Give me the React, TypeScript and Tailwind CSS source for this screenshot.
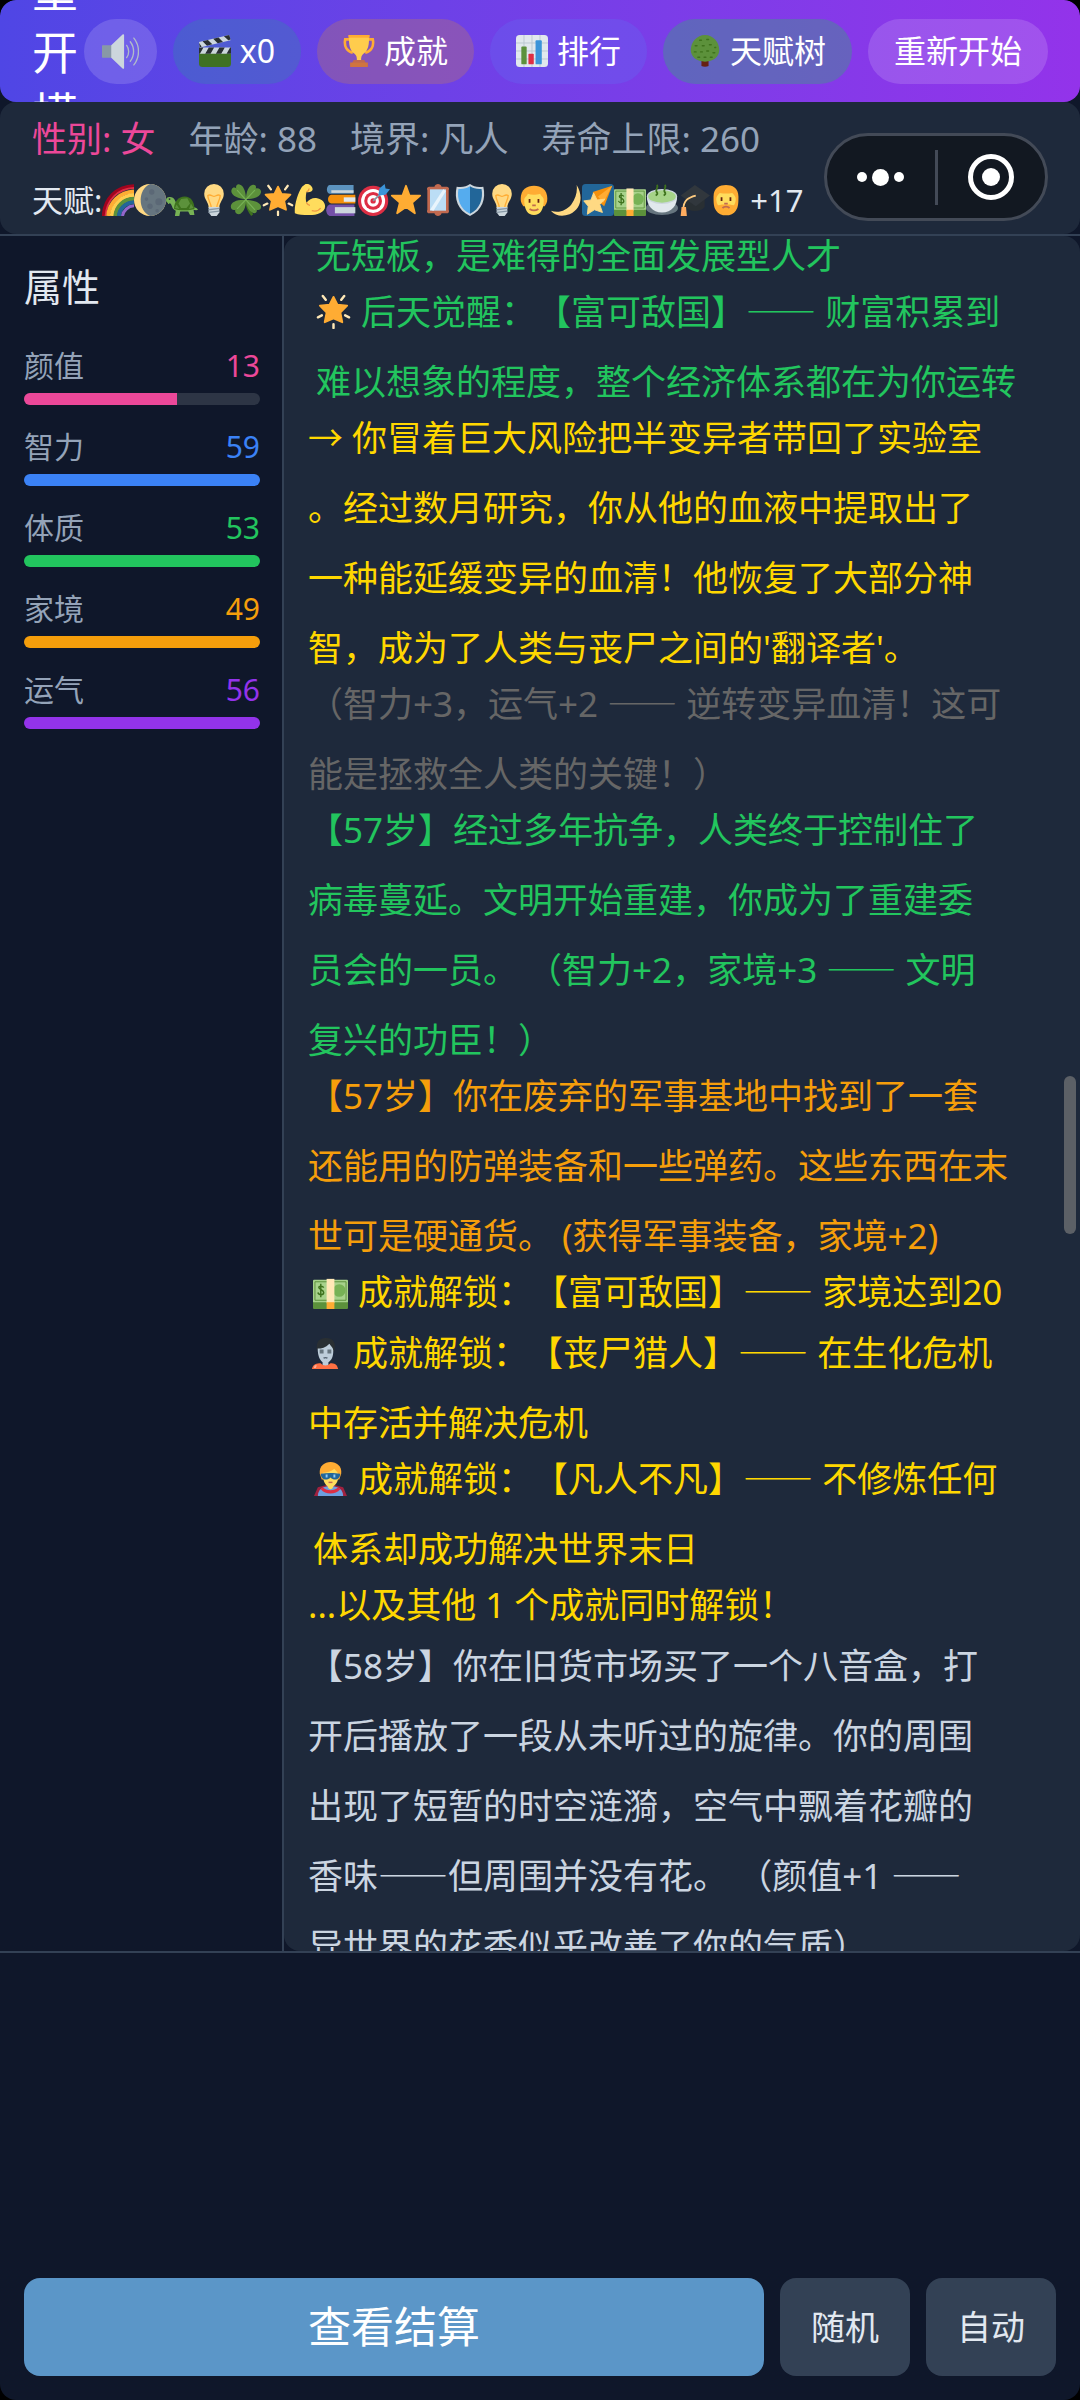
import type { ReactNode } from "react";
import clsx from "clsx";

// 所有表情图标都画在 36x36 的画布上
const GLYPHS: Record<string, ReactNode> = {
  speaker: (
    <>
      <path fill="#8899a6" d="M1 12c-1 0-1 .5-1 1v10c0 .6 0 1 1 1h9V12z" />
      <path fill="#ccd6dd" d="M20 1.500c.6-.6 1.500-.5 1.500.5v32c0 1-.9 1-1.500.5L9 24V12z" />
      <g fill="none" stroke="#b0bcc8" strokeLinecap="round" strokeWidth="1.300">
        <path d="M24 12c2.600 3.500 2.600 8.500 0 12" />
        <path d="M27.500 8.500c4.300 5.500 4.300 13.500 0 19" />
        <path d="M31 5c6 7.500 6 18.500 0 26" />
      </g>
    </>
  ),
  clapper: (
    <>
      <path fill="#3f7123" d="M36 32a4 4 0 0 1-4 4H4a4 4 0 0 1-4-4V18h36z" />
      <path fill="#ccd6dd" d="M0 14h36v7H0z" />
      <path fill="#292f33" d="M0 14h5l-4 7H0zM11 14h6l-4 7H7zM23 14h6l-4 7h-6zM35 14h1v7h-5z" />
      <path fill="#ccd6dd" d="M0 8 34 0l1.500 6L1 14z" />
      <path fill="#292f33" d="m4 7 6-1.500 5 5L9 12zM16 4.200 22 2.800l5 5-6 1.400zM28 1.400 34 0l1.500 5-2.500 1zM0 9l3 4-2 1z" />
    </>
  ),
  trophy: (
    <>
      <path
        fill="none"
        stroke="#ffac33"
        strokeWidth="3"
        d="M9 5H2.500C1 12 4 18 11 20M27 5h6.500C35 12 32 18 25 20"
      />
      <path fill="#ffcc4d" d="M7 1h22c1 9-1 17-6 20-2 1.500-3 4-2.500 9h-5c.5-5-.5-7.500-2.500-9C8 18 6 10 7 1z" />
      <path fill="#ffac33" d="M6 0h24v3H6z" />
      <path fill="#c1694f" d="M12 28h12l2 4H10z" />
      <path fill="#d0743f" d="M8 31h20v5H8z" />
    </>
  ),
  chart: (
    <>
      <rect width="36" height="36" rx="4" fill="#e1e8ed" />
      <path stroke="#b8c5cf" d="M0 9h36M0 18h36M0 27h36M9 0v36M18 0v36M27 0v36" />
      <rect x="6" y="13" width="6" height="20" rx="1" fill="#5c913b" />
      <rect x="14" y="21" width="6" height="12" rx="1" fill="#dd2e44" />
      <rect x="22" y="6" width="7" height="27" rx="1" fill="#3b94d9" />
    </>
  ),
  tree: (
    <>
      <path fill="#662113" d="M14 27h8v8c-2 1-6 1-8 0z" />
      <path fill="#5c913b" d="M18 0C27 0 34 8 34 17c0 8-7 13-16 13S2 25 2 17C2 8 9 0 18 0z" />
      <g stroke="#3e721d" strokeLinecap="round" strokeWidth="1.600">
        <path d="M12 6h2M20 5h2M7 12h2M15 12h2M23 11h2M29 14h1M6 19h2M13 19h2M20 18h2M27 20h2M10 25h2M17 25h2M24 25h2" />
      </g>
    </>
  ),
  rainbow: (
    <g fill="none" strokeWidth="4.500">
      <path stroke="#a0041e" d="M2 36C3 17 16 3 36 2.500" />
      <path stroke="#dd2e44" d="M4 36C5 18 18 5 36 4.500" strokeWidth="2" />
      <path stroke="#ffac33" d="M7 36C8 21 20 9 36 8.500" />
      <path stroke="#ffcc4d" d="M11 36C12 23 23 13 36 12.500" />
      <path stroke="#5c913b" d="M15 36c1-11 9-19 21-19.500" />
      <path stroke="#226699" d="M19 36c1-9 8-15 17-15.500" />
      <path stroke="#9266cc" d="M23 36c1-6 6-11 13-11.500" strokeWidth="3.500" />
    </g>
  ),
  waning: (
    <>
      <circle cx="18" cy="18" r="18" fill="#ffd983" />
      <path fill="#66757f" d="M18 0a18 18 0 0 1 0 36C4 30 4 6 18 0z" />
      <g fill="#5b6876">
        <circle cx="20" cy="9" r="3" />
        <circle cx="28" cy="20" r="4" />
        <circle cx="18" cy="25" r="3" />
        <circle cx="26" cy="30" r="2" />
        <circle cx="14" cy="17" r="2" />
      </g>
    </>
  ),
  turtle: (
    <>
      <path fill="#77b255" d="M0 18c0-3 3-4 6-3 3 .5 5 4 6 9l18 2c2 0 5 1 6 3-2 1-4 0-5 0l1 6h-5l-2-4H16l-1 5h-5l1-6c-4-1-4-6-6-8-2 0-5-1-5-4z" />
      <path fill="#3e721d" d="M9 28c0-8 5-14 12-14s11 6 11 14c-5 2-18 2-23 0z" />
      <path fill="#5c913b" d="m17 17 7-1 3 6-4 5h-6l-3-5zM12 23l3 5-5-1zM28 22l3 5-5 1z" />
      <circle cx="4" cy="17" r="1" fill="#292f33" />
    </>
  ),
  bulb: (
    <>
      <path fill="#ffd983" d="M29 11c0 7-5 9-5 16H12c0-7-5-9-5-16a11 11 0 0 1 22 0z" />
      <path fill="none" stroke="#ffac33" strokeWidth="1.500" d="M15 27c0-5-4-9-4-14 3-2 5 1 7 1s4-3 7-1c0 5-4 9-4 14" />
      <path fill="#ccd6dd" d="M12 26h12v6l-3 4h-6l-3-4z" />
      <path stroke="#8899a6" strokeWidth="1.500" d="m12 29 12-1.500M12 32l12-1.500" />
    </>
  ),
  clover: (
    <>
      <path fill="none" stroke="#3e721d" strokeWidth="3" d="M18 18c1 7 3 12 7 17" />
      <path
        fill="#5c913b"
        d="M18 17C9 17-1 12 2 6c1-3 4-2 5-1C6 1 9-1 12 1c4 2 6 9 6 16zM18 17c0-8 3-15 7-16 3-1 5 1 4 4 3-1 6 1 6 4-1 6-9 8-17 8zM18 18C8 17 0 21 1 26c0 3 3 4 5 3-1 3 1 5 4 5 5-1 8-8 8-16zM18 18c9 0 17 3 17 8 0 3-3 4-5 3 1 3-2 5-5 3-4-2-7-8-7-14z"
      />
      <path stroke="#77b255" strokeWidth="1.300" d="m8 7 20 22M28 7 8 28" />
    </>
  ),
  glow: (
    <>
      <path
        stroke="#ffe8b6"
        strokeLinecap="round"
        strokeWidth="2.500"
        d="m7 2 3 4M29 2l-3 4M2 24l4-2M34 24l-4-2M18 31v4"
      />
      <path
        fill="#ffac33"
        stroke="#ffac33"
        strokeLinejoin="round"
        strokeWidth="2"
        d="m18 3 4 8 10 1-7 7 2 10-9-4-9 4 2-10-7-7 10-1z"
      />
    </>
  ),
  muscle: (
    <>
      <path fill="#ffdc5d" d="M13 0c3-1 8 2 8 6 0 3-5 4-7 3-1 5-1 9 0 12 3-4 8-6 12-5 6 1 9 5 9 9 0 7-9 10-18 10-7 0-12 0-16-2C0 24 4 11 9 3z" />
      <path fill="none" stroke="#ef9645" strokeWidth="1.500" d="M14 21c1 2 2 3 4 3M20 30c4 1 8 0 10-3M14 9c2-1 3-2 3-4" />
    </>
  ),
  books: (
    <>
      <path fill="#5c93bf" d="M4 1h27v10H4c-4-1-4-9 0-10z" />
      <path fill="#ccd6dd" d="M6 7h25v3H6z" />
      <path fill="#f4900c" d="M6 12h27v10H6c-5-1-5-9 0-10z" />
      <path fill="#e1e8ed" d="M20 15h13v5H20z" />
      <path fill="#7450a8" d="M4 23h28v13H4c-5-2-5-11 0-13z" />
      <path fill="#ccd6dd" d="M10 26h23v7H10z" />
    </>
  ),
  dart: (
    <>
      <circle cx="17" cy="19" r="17" fill="#dd2e44" />
      <circle cx="17" cy="19" r="13.500" fill="#fff" />
      <circle cx="17" cy="19" r="10" fill="#dd2e44" />
      <circle cx="17" cy="19" r="6.500" fill="#fff" />
      <circle cx="17" cy="19" r="3" fill="#dd2e44" />
      <path stroke="#8899a6" strokeWidth="2" d="M17 19 31 6" />
      <path fill="#3b94d9" d="m23 12 1-7 6-5 1 5 5 1-5 6-7 1z" />
    </>
  ),
  star: (
    <path
      fill="#ffac33"
      stroke="#ffac33"
      strokeLinejoin="round"
      strokeWidth="2"
      d="m18 2 4 11h12l-9 8 3 12-10-7-10 7 3-12-9-8h12z"
    />
  ),
  mirror: (
    <>
      <path fill="#c1694f" d="M14 3c1-4 7-4 8 0h6c2 0 3 2 2 4v22c1 2 0 4-2 4h-6c-1 4-7 4-8 0H8c-2 0-3-2-2-4V7C5 5 6 3 8 3z" />
      <path fill="#bbddf5" d="M9 6h18v24H9z" />
      <path fill="#e8f4fc" d="m24 6 3 2-14 22-4-1z" />
    </>
  ),
  shield: (
    <>
      <path fill="#ccd6dd" d="M18 0c4 3 9 4 15 3 3 14-1 26-15 33C4 29 0 17 3 3c6 1 11 0 15-3z" />
      <path fill="#55acee" d="M18 2.500C14 5 10 6 5 5.500 3 17 7 28 18 33.500z" />
      <path fill="#226699" d="M18 2.500c4 2.500 8 3.500 13 3C33 17 29 28 18 33.500z" />
    </>
  ),
  man: (
    <>
      <path fill="#ffac33" d="M3 17C3 6 10 2 18 2s15 4 15 15c0 4-2 7-3 8H6c-1-1-3-4-3-8z" />
      <path fill="#ffdc5d" d="M7 18c0-3 3-4 4-7 5 2 10 1 14 0 1 3 4 4 4 7 0 11-4 17-11 17S7 29 7 18z" />
      <path fill="#662113" d="M12 17h2v4h-2zM22 17h2v4h-2z" />
      <path fill="none" stroke="#c1694f" strokeWidth="2" d="M16 24h4M13 28c3 2 7 2 10 0" />
    </>
  ),
  crescent: <path fill="#ffd983" d="M30 1c8 13 5 27-8 33-8 3-16 2-21-4 9 3 17 0 23-7 5-7 7-14 6-22z" />,
  comet: (
    <>
      <rect width="36" height="36" rx="4" fill="#226699" />
      <path fill="#f4900c" d="M34 2 12 9l3 8 10 8z" />
      <path fill="#ffac33" d="M34 2 18 14l6 7z" />
      <path
        fill="#ffd983"
        stroke="#ffd983"
        strokeLinejoin="round"
        d="m13 10 4 8 9-1-6 6 3 9-9-3-8 5 1-9-5-6 8-1z"
      />
    </>
  ),
  cash: (
    <>
      <rect y="6" width="36" height="24" rx="1" fill="#a7d28b" />
      <path fill="#5c913b" d="M0 29h36v6c0 1-1 1-1 1H1c-1 0-1-1-1-1z" />
      <path fill="none" stroke="#5c913b" d="M2 8h32v19H2z" />
      <circle cx="27" cy="17" r="6.500" fill="#77b255" />
      <path fill="none" stroke="#3e721d" strokeWidth="1.500" d="M11 14c-1-2-5-2-5 0s5 2 5 5-5 3-6 0M8 10v14" />
      <path fill="#ffe8b6" d="M14 5h8v25h-8z" />
      <path fill="#ffac33" d="M14 29h8v7h-8z" />
    </>
  ),
  tea: (
    <>
      <ellipse cx="18" cy="27" rx="18" ry="8" fill="#66757f" />
      <path fill="#e1e8ed" d="M1 14h34c0 10-6 18-17 18S1 24 1 14z" />
      <ellipse cx="18" cy="14" rx="17" ry="8.500" fill="#ccd6dd" />
      <ellipse cx="18" cy="14" rx="15.500" ry="7" fill="#a6d388" />
      <path fill="none" stroke="#3e721d" strokeWidth="2" d="M12 1c3 2-2 5 0 8 2 2 0 3-1 4M21 1c3 2-2 5 0 8 2 2 0 3-1 4" />
    </>
  ),
  cap: (
    <>
      <path fill="#292f33" d="M8 16v10c4 6 18 6 22 0V16z" />
      <path fill="#31373d" d="M19 1 36 13 20 25 3 13z" />
      <path fill="none" stroke="#ffcc80" strokeWidth="2" d="M20 13c-8 2-14 5-14 16" />
      <path fill="#ffac60" d="M4 26h5l1 10H3z" />
    </>
  ),
  beard: (
    <>
      <path fill="#ffac33" d="M4 14C4 4 11 1 18 1s14 3 14 13c0 7 0 12-3 16-4 7-18 7-22 0C4 26 4 21 4 14z" />
      <path fill="#ffdc5d" d="M7 17c0-3 2-5 4-7 5 1 9 1 14 0 2 2 4 4 4 7 0 3-1 5-2 7-3-1-6-1-9-1s-6 0-9 1c-1-2-2-4-2-7z" />
      <path fill="#662113" d="M12 15h2v4h-2zM22 15h2v4h-2z" />
      <path fill="none" stroke="#c1694f" strokeWidth="2" d="M16 22h4M14 27c2-2 6-2 8 0" />
    </>
  ),
  zombie: (
    <>
      <path fill="#292f33" d="M9 15C8 5 13 3 19 3c7 0 10 5 8 14z" />
      <path fill="#bdcdda" d="M10 14c4 0 8-1 12-5 2 3 4 4 4 7 0 7-2 10-5 12v4h-6v-4c-3-2-5-7-5-14z" />
      <path fill="#66757f" d="M12 15h4v4h-4zM20 15h4v4h-4z" />
      <path fill="none" stroke="#546270" strokeWidth="1.500" d="M16 24c1-1 3-1 4 0" />
      <path fill="#ff7043" d="M4 35c1-5 5-6 9-6 3 3 7 3 10 0 4 0 7 1 8 6z" />
      <path fill="none" stroke="#ffb199" strokeWidth="2" d="M8 31c0 1-1 2-1 3" />
    </>
  ),
  hero: (
    <>
      <path fill="#a0213f" d="M1 36 5 27l8-2h10l8 2 4 9z" />
      <path fill="#6d9fe0" d="M5 36c0-6 4-9 10-10h6c6 1 10 4 10 10z" />
      <path fill="#dd2e44" d="M10 27c4 4 12 4 16 0l2 2c-5 6-15 6-20 0z" />
      <path fill="#ffac33" d="M7 13C6 5 12 1 18 1s12 4 11 12l-2 6H9z" />
      <path fill="#ffdc5d" d="M10 12c4 0 9-1 12-4 2 3 4 3 4 7 0 6-2 9-5 11-1 4-5 4-6 0-3-2-5-7-5-14z" />
      <path fill="#226699" d="M8 13c6-1 14-1 20 0 0 6-6 8-10 4-4 4-10 2-10-4z" />
      <path fill="#8ccaf7" d="M13 14h2v3h-2zM21 14h2v3h-2z" />
      <path stroke="#c1694f" strokeWidth="1.500" d="M16 22h4" />
    </>
  ),
};

function Emoji({ name, className }: { name: string; className: string }) {
  return (
    <svg viewBox="0 0 36 36" aria-hidden="true" className={clsx("shrink-0", className)}>
      {GLYPHS[name]}
    </svg>
  );
}

const HEADER_ACTIONS = [
  { icon: "clapper", label: "x0", bg: "bg-[#10b981]/20" },
  { icon: "trophy", label: "成就", bg: "bg-[#f59e0b]/20" },
  { icon: "chart", label: "排行", bg: "bg-[#6366f1]/35" },
  { icon: "tree", label: "天赋树", bg: "bg-[#22c55e]/30" },
  { icon: null, label: "重新开始", bg: "bg-white/15" },
];

const TALENTS = [
  "rainbow", "waning", "turtle", "bulb", "clover", "glow", "muscle", "books", "dart", "star",
  "mirror", "shield", "bulb", "man", "crescent", "comet", "cash", "tea", "cap", "beard",
];

const ATTRIBUTES = [
  { label: "颜值", value: 13, text: "text-[#ec4899]", bar: "bg-[#ec4899]" },
  { label: "智力", value: 59, text: "text-[#3b82f6]", bar: "bg-[#3b82f6]" },
  { label: "体质", value: 53, text: "text-[#22c55e]", bar: "bg-[#22c55e]" },
  { label: "家境", value: 49, text: "text-[#f59e0b]", bar: "bg-[#f59e0b]" },
  { label: "运气", value: 56, text: "text-[#9333ea]", bar: "bg-[#9333ea]" },
];

const ATTRIBUTE_MAX = 20;

type LogEntry = {
  color: string;
  lines: string[];
  icon?: string;
  indent?: string;
};

const LOG: LogEntry[] = [
  { color: "text-[#22c55e]", indent: "pl-2", lines: ["无短板，是难得的全面发展型人才"] },
  {
    color: "text-[#22c55e]",
    indent: "pl-2",
    icon: "glow",
    lines: ["后天觉醒：【富可敌国】—— 财富积累到", "难以想象的程度，整个经济体系都在为你运转"],
  },
  {
    color: "text-[#ffd700]",
    lines: [
      "→ 你冒着巨大风险把半变异者带回了实验室",
      "。经过数月研究，你从他的血液中提取出了",
      "一种能延缓变异的血清！他恢复了大部分神",
      "智，成为了人类与丧尸之间的'翻译者'。",
    ],
  },
  { color: "text-[#666666]", lines: ["（智力+3，运气+2 —— 逆转变异血清！这可", "能是拯救全人类的关键！）"] },
  {
    color: "text-[#22c55e]",
    lines: [
      "【57岁】经过多年抗争，人类终于控制住了",
      "病毒蔓延。文明开始重建，你成为了重建委",
      "员会的一员。 （智力+2，家境+3 —— 文明",
      "复兴的功臣！）",
    ],
  },
  {
    color: "text-[#f59e0b]",
    lines: [
      "【57岁】你在废弃的军事基地中找到了一套",
      "还能用的防弹装备和一些弹药。这些东西在末",
      "世可是硬通货。 (获得军事装备，家境+2)",
    ],
  },
  { color: "text-[#ffd700]", indent: "pl-[5px]", icon: "cash", lines: ["成就解锁：【富可敌国】—— 家境达到20"] },
  { color: "text-[#ffd700]", icon: "zombie", lines: ["成就解锁：【丧尸猎人】—— 在生化危机", "中存活并解决危机"] },
  {
    color: "text-[#ffd700]",
    indent: "pl-[5px]",
    icon: "hero",
    lines: ["成就解锁：【凡人不凡】—— 不修炼任何", "体系却成功解决世界末日"],
  },
  { color: "text-[#ffd700]", lines: ["...以及其他 1 个成就同时解锁！"] },
  {
    color: "text-[#cbd5e1]",
    lines: [
      "【58岁】你在旧货市场买了一个八音盒，打",
      "开后播放了一段从未听过的旋律。你的周围",
      "出现了短暂的时空涟漪，空气中飘着花瓣的",
      "香味——但周围并没有花。 （颜值+1 ——",
      "异世界的花香似乎改善了你的气质）",
    ],
  },
];

function Header() {
  return (
    <header className="flex h-[102px] shrink-0 items-center overflow-hidden rounded-2xl bg-linear-to-r from-[#4f46e5] to-[#9333ea] px-8 text-white">
      <h1 className="min-w-0 flex-1 text-[46px] leading-[62px] break-all">人生重开模拟器</h1>
      <div className="flex shrink-0 gap-4 text-[32px]">
        <button type="button" aria-label="声音" className="flex h-[65px] items-center rounded-full bg-white/15 px-[18px]">
          <Emoji name="speaker" className="size-[37px]" />
        </button>
        {HEADER_ACTIONS.map((action) => (
          <button
            key={action.label}
            type="button"
            className={clsx("flex h-[65px] items-center gap-[9px] rounded-full px-[26px]", action.bg)}
          >
            {action.icon && <Emoji name={action.icon} className="size-8" />}
            {action.label}
          </button>
        ))}
      </div>
    </header>
  );
}

function Capsule() {
  return (
    <div className="absolute top-[31px] right-8 flex h-[88px] w-[224px] items-center rounded-full border-[3px] border-[#434a57] bg-[#121821]">
      <button type="button" aria-label="更多" className="flex flex-1 items-center justify-center gap-[5px]">
        <span className="size-[10px] rounded-full bg-white" />
        <span className="size-[17px] rounded-full bg-white" />
        <span className="size-[10px] rounded-full bg-white" />
      </button>
      <span className="h-[55px] w-[3px] bg-[#434a57]" />
      <button type="button" aria-label="关闭" className="flex flex-1 items-center justify-center">
        <span className="flex size-[46px] items-center justify-center rounded-full border-[5px] border-white">
          <span className="size-[18px] rounded-full bg-white" />
        </span>
      </button>
    </div>
  );
}

function StatusBar() {
  return (
    <section className="relative h-[132px] shrink-0 rounded-2xl bg-[#1e293b] px-8 pt-[11px]">
      <div className="flex gap-[33px] text-[35px] leading-[52px] text-[#94a3b8]">
        <span className="text-[#ec4899]">性别: 女</span>
        <span>年龄: 88</span>
        <span>境界: 凡人</span>
        <span>寿命上限: 260</span>
      </div>
      <div className="mt-[11px] flex items-center text-[31px] leading-[48px] text-[#e2e8f0]">
        <span>天赋:</span>
        {TALENTS.map((name, i) => (
          <Emoji key={i} name={name} className="size-8" />
        ))}
        <span className="pl-2">+17</span>
      </div>
      <Capsule />
    </section>
  );
}

function Sidebar() {
  return (
    <aside className="w-[284px] shrink-0 border-r-2 border-[#334155] pt-6 pr-[22px] pl-6">
      <h2 className="mb-[34px] text-[38px] leading-[52px] text-[#e2e8f0]">属性</h2>
      {ATTRIBUTES.map((attr) => {
        const percent = Math.min(100, (attr.value / ATTRIBUTE_MAX) * 100);
        return (
          <div key={attr.label} className="mb-[22px]">
            <div className="mb-[7px] flex justify-between text-[30px] leading-[40px]">
              <span className="text-[#94a3b8]">{attr.label}</span>
              <span className={attr.text}>{attr.value}</span>
            </div>
            <div className="h-3 overflow-hidden rounded-full bg-[#2d3545]">
              <div className={clsx("h-full", attr.bar)} style={{ width: `${percent}%` }} />
            </div>
          </div>
        );
      })}
    </aside>
  );
}

// 破折号单独使用全角字形，两个字符才能连成一条线
function LogText({ text }: { text: string }) {
  return (
    <span className="whitespace-pre">
      {text.split(/(——)/).map((part, i) =>
        part === "——" ? (
          <span key={i} className='font-["Noto_Sans_CJK_SC",sans-serif] leading-none font-medium [font-feature-settings:"fwid"]'>
            {part}
          </span>
        ) : (
          part
        ),
      )}
    </span>
  );
}

function EventLog() {
  return (
    <section className="relative min-w-0 flex-1 overflow-hidden rounded-2xl bg-[#1e293b] pl-6">
      <div className="-mt-1 text-[35px] leading-[47px] whitespace-nowrap">
        {LOG.map((entry, i) => (
          <div
            key={i}
            className={clsx(
              "flex flex-col gap-[23px]",
              entry.color,
              entry.indent,
              entry.lines.length === 1 && i > 0 ? "mb-[14px]" : "mb-[9px]",
            )}
          >
            {entry.lines.map((line, n) => (
              <p key={n} className="flex items-center gap-[10px]">
                {n === 0 && entry.icon && <Emoji name={entry.icon} className="size-[35px]" />}
                <LogText text={line} />
              </p>
            ))}
          </div>
        ))}
      </div>
      {/* 滚动条 */}
      <div className="absolute top-[840px] right-1 h-[158px] w-3 rounded-full bg-[#5c6066]" />
    </section>
  );
}

export default function App() {
  return (
    <div lang="zh-CN" className="h-screen bg-black">
      <main className='flex h-full flex-col overflow-hidden rounded-2xl bg-[#0f172a] font-["Noto_Sans","Noto_Sans_CJK_SC",sans-serif] [text-spacing-trim:space-all]'>
        <Header />
        <StatusBar />
        <div className="flex min-h-0 flex-1 border-y-2 border-[#334155]">
          <Sidebar />
          <EventLog />
        </div>
        <footer className="flex shrink-0 gap-4 px-6 pt-[325px] pb-6">
          <button type="button" className="h-[98px] flex-1 rounded-2xl bg-[#5b96c8] text-[43px] text-white">
            查看结算
          </button>
          <button type="button" className="h-[98px] w-[130px] rounded-2xl bg-[#334155] text-[34px] text-[#e2e8f0]">
            随机
          </button>
          <button type="button" className="h-[98px] w-[130px] rounded-2xl bg-[#334155] text-[34px] text-[#e2e8f0]">
            自动
          </button>
        </footer>
      </main>
    </div>
  );
}
